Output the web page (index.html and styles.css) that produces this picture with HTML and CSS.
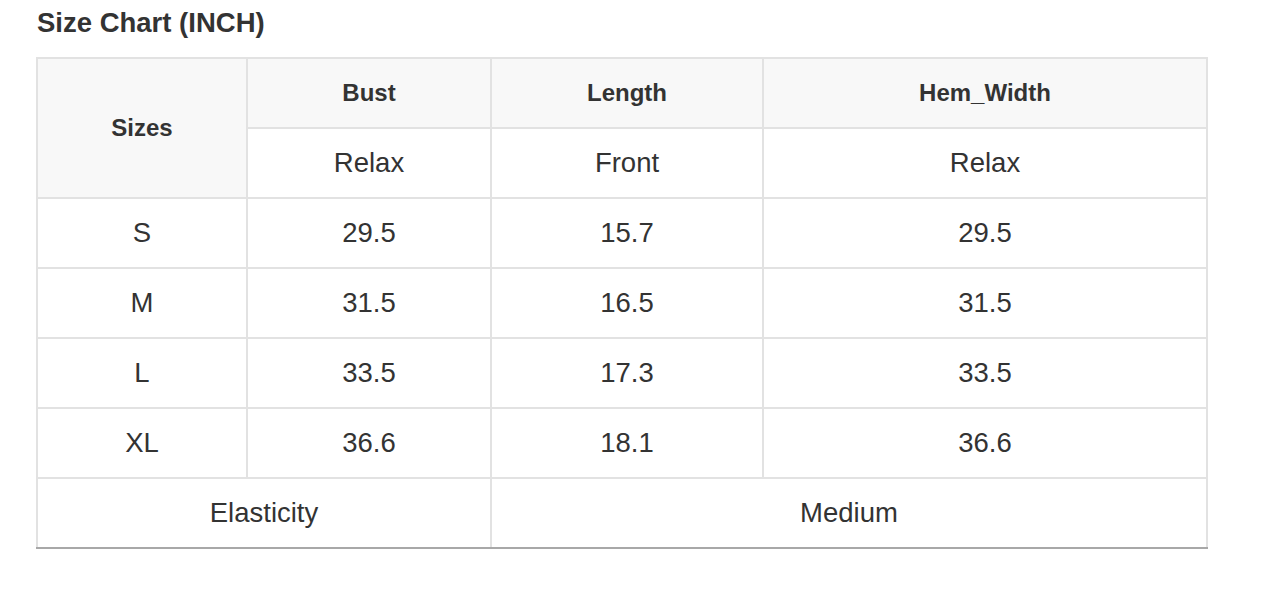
FILE: index.html
```html
<!DOCTYPE html>
<html>
<head>
<meta charset="utf-8">
<link rel="stylesheet" href="styles.css">
</head>
<body>
<div class="page">
  <h2 class="title">Size Chart (INCH)</h2>
  <table class="chart">
    <colgroup>
      <col class="c1"><col class="c2"><col class="c3"><col class="c4">
    </colgroup>
    <thead>
      <tr class="head">
        <th rowspan="2">Sizes</th>
        <th>Bust</th>
        <th>Length</th>
        <th>Hem_Width</th>
      </tr>
      <tr>
        <td>Relax</td>
        <td>Front</td>
        <td>Relax</td>
      </tr>
    </thead>
    <tbody>
      <tr><td>S</td><td>29.5</td><td>15.7</td><td>29.5</td></tr>
      <tr><td>M</td><td>31.5</td><td>16.5</td><td>31.5</td></tr>
      <tr><td>L</td><td>33.5</td><td>17.3</td><td>33.5</td></tr>
      <tr><td>XL</td><td>36.6</td><td>18.1</td><td>36.6</td></tr>
      <tr class="last"><td colspan="2">Elasticity</td><td colspan="2">Medium</td></tr>
    </tbody>
  </table>
</div>
</body>
</html>
```
FILE: styles.css
```css
html, body {
  margin: 0;
  padding: 0;
  background: #fff;
}
.page {
  padding: 6px 0 0 36px;
  font-family: Arial, "Liberation Sans", Helvetica, sans-serif;
  color: #333;
}
.title {
  margin: 0 0 17px 1px;
  font-family: Arial, "Liberation Sans", Helvetica, sans-serif;
  font-size: 27.5px;
  line-height: 34px;
  font-weight: bold;
  color: #333;
}
.chart {
  border-collapse: collapse;
  table-layout: fixed;
  width: 1170px;
  font-family: Arial, "Liberation Sans", Helvetica, sans-serif;
}
.c1 { width: 210px; }
.c2 { width: 244px; }
.c3 { width: 272px; }
.c4 { width: 444px; }
.chart th, .chart td {
  border: 2px solid #e2e2e2;
  height: 68px;
  padding: 0;
  text-align: center;
  vertical-align: middle;
  font-family: Arial, "Liberation Sans", Helvetica, sans-serif;
  font-size: 27.5px;
  font-weight: normal;
}
.chart th {
  background: #f8f8f8;
  font-weight: bold;
  font-size: 24px;
}
.chart .last td {
  border-bottom-color: #a8a8a8;
}
```
